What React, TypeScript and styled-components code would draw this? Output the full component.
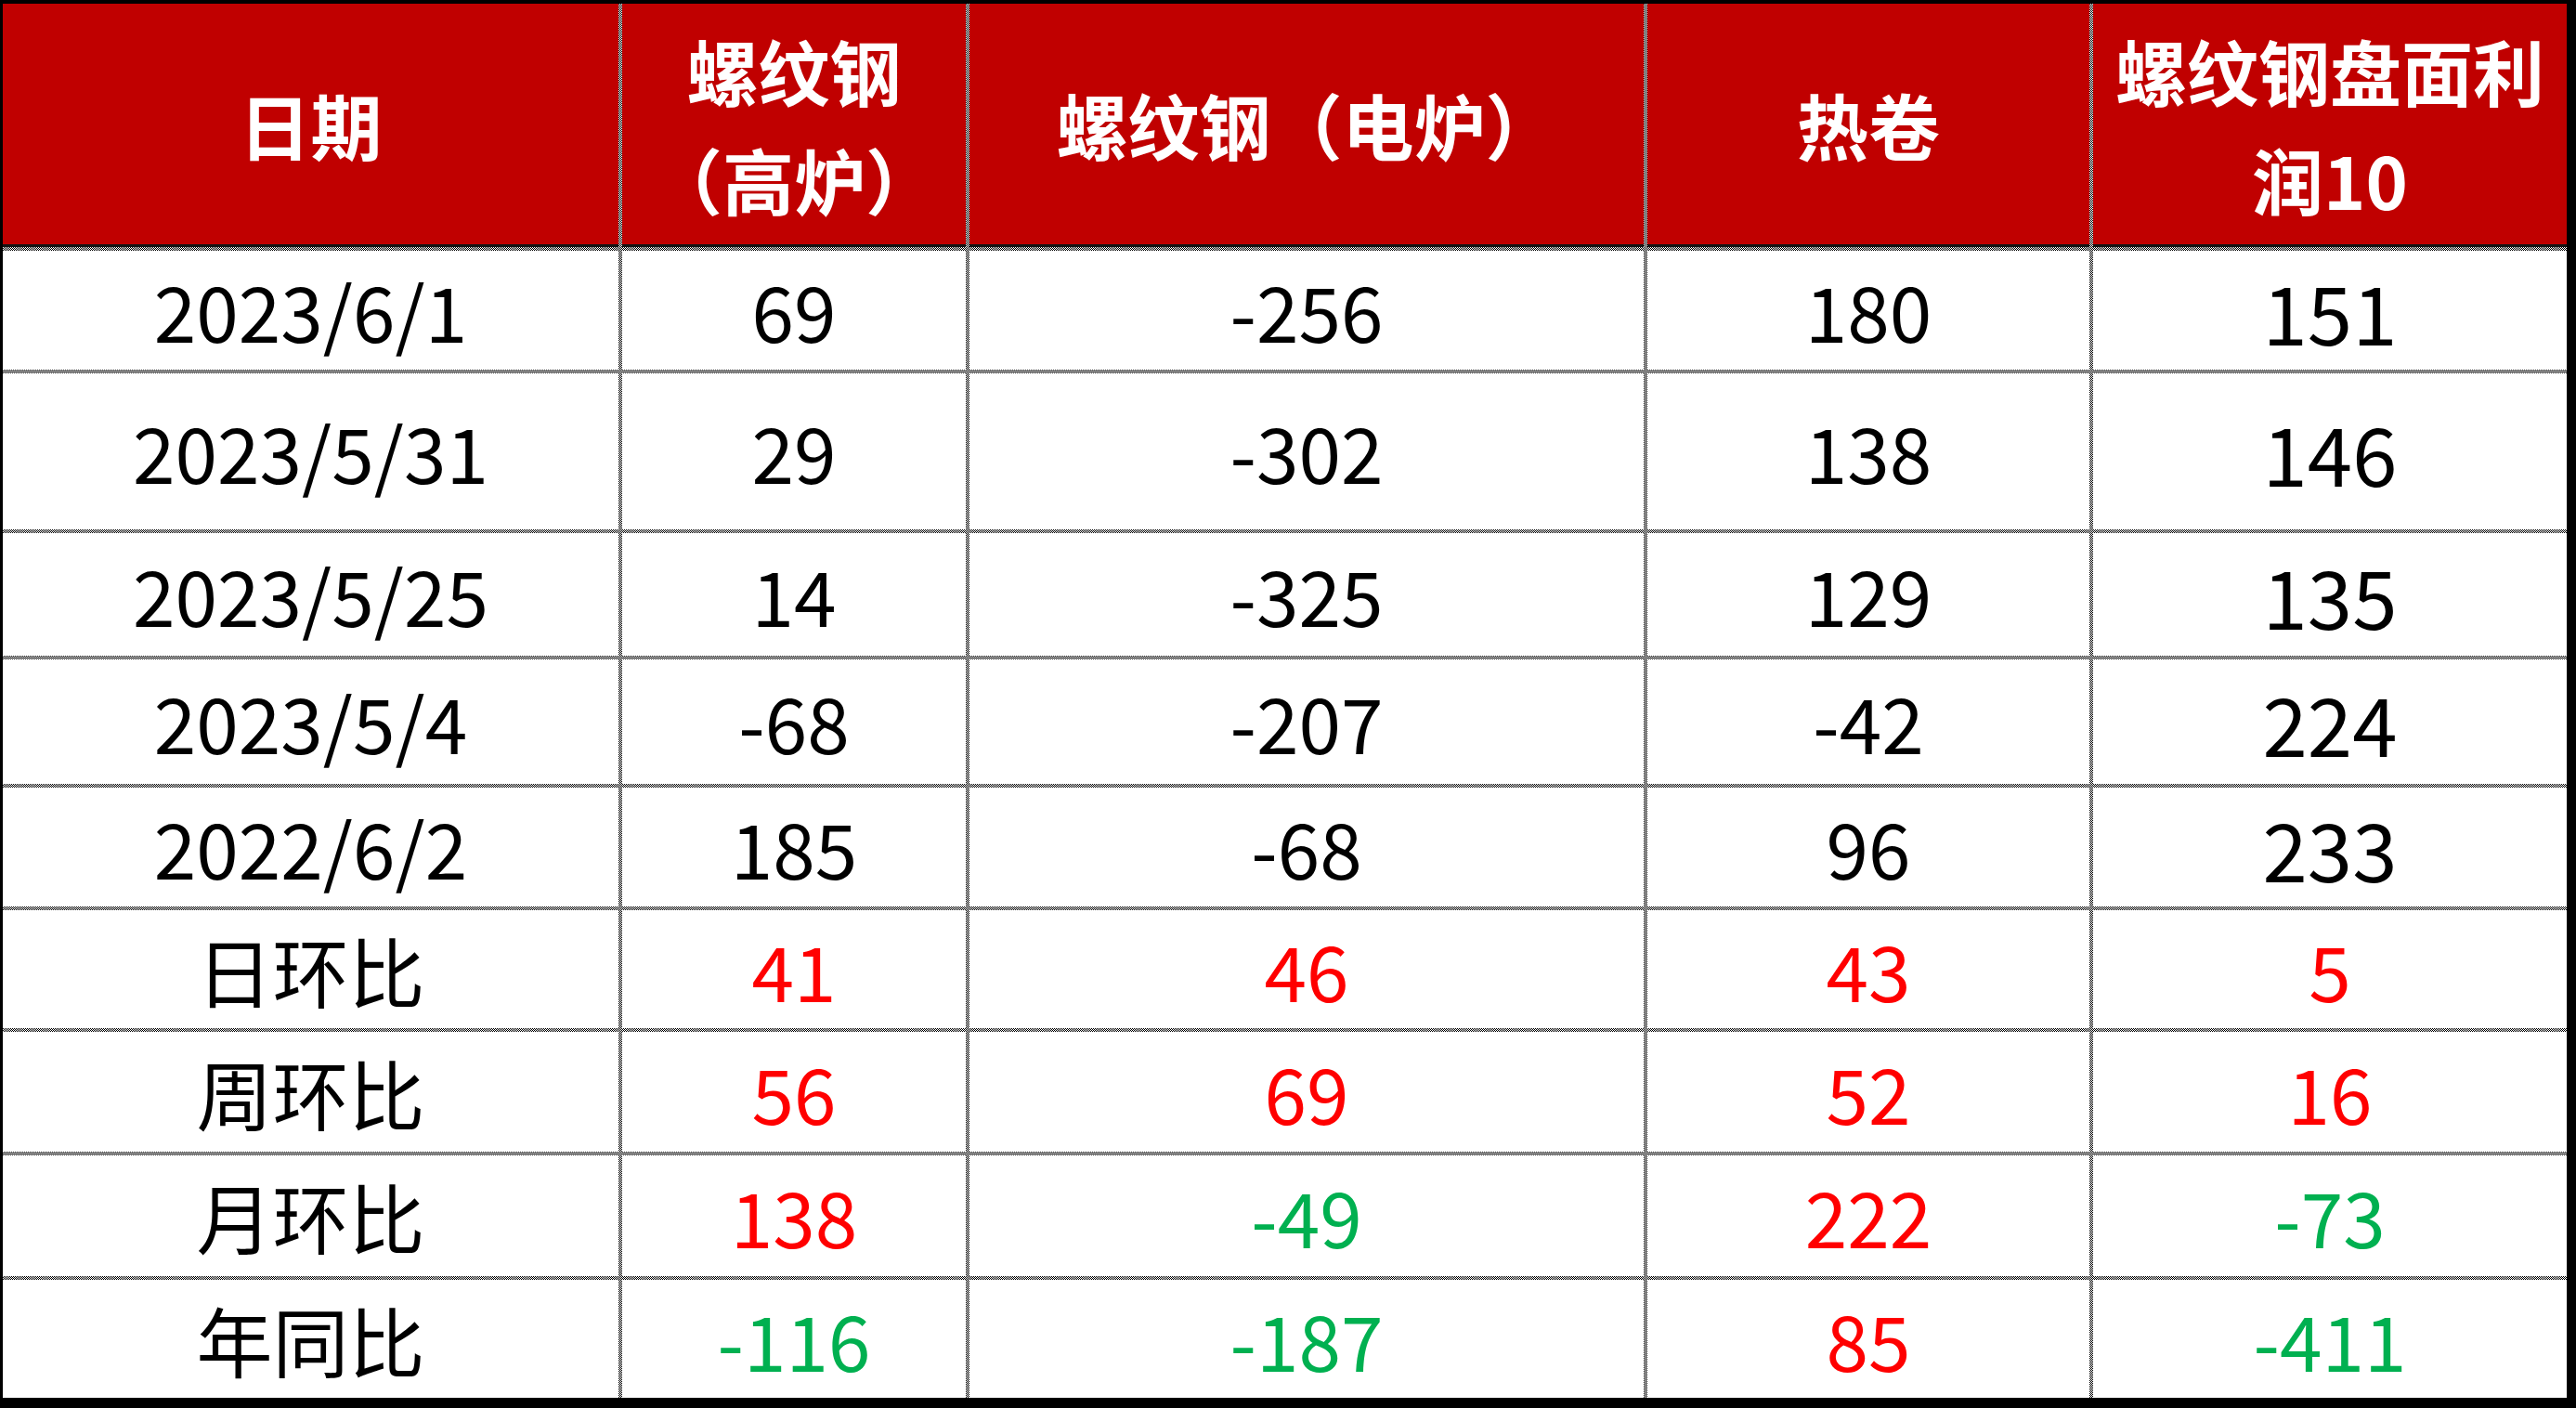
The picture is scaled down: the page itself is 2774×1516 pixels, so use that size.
import styled, { createGlobalStyle } from 'styled-components';

type Tone = 'plain' | 'up' | 'down';

interface Row {
  label: string;
  values: [number, number, number, number];
  toned?: boolean;
}

const headers = ['日期', '螺纹钢\n（高炉）', '螺纹钢（电炉）', '热卷', '螺纹钢盘面利\n润10'];

const rows: Row[] = [
  { label: '2023/6/1', values: [69, -256, 180, 151] },
  { label: '2023/5/31', values: [29, -302, 138, 146] },
  { label: '2023/5/25', values: [14, -325, 129, 135] },
  { label: '2023/5/4', values: [-68, -207, -42, 224] },
  { label: '2022/6/2', values: [185, -68, 96, 233] },
  { label: '日环比', values: [41, 46, 43, 5], toned: true },
  { label: '周环比', values: [56, 69, 52, 16], toned: true },
  { label: '月环比', values: [138, -49, 222, -73], toned: true },
  { label: '年同比', values: [-116, -187, 85, -411], toned: true },
];

const GlobalStyle = createGlobalStyle`
  html, body {
    margin: 0;
    padding: 0;
    background: #ffffff;
  }
  body {
    font-family: "Noto Sans CJK SC", "Noto Sans", sans-serif;
  }
`;

const Sheet = styled.div`
  box-sizing: border-box;
  width: 2774px;
  height: 1516px;
  border-style: solid;
  border-color: #000000;
  border-width: 4px 10px 11px 3px;
  display: grid;
  grid-template-columns: 663px 370px 726px 476px 510px;
  grid-template-rows: 262px 128px 168px 132px 134px 128px 127px 129px 130px 127px;
  gap: 4px;
  /* dotted gridlines show through the gaps */
  background: repeating-conic-gradient(#000000 0 25%, #ffffff 0 50%) 0 0 / 2px 2px;
`;

const HeadCell = styled.div`
  box-sizing: border-box;
  background: #c00000;
  border-bottom: 3px solid #141414;
  color: #ffffff;
  font-family: "Noto Sans CJK SC", sans-serif;
  font-weight: 700;
  font-size: 77px;
  line-height: 117px;
  white-space: pre-line;
  text-align: center;
  display: flex;
  align-items: center;
  justify-content: center;
`;

const toneColor: Record<Tone, string> = {
  plain: '#000000',
  up: '#ff0000',
  down: '#00b050',
};

const Cell = styled.div<{ $tone: Tone; $large?: boolean }>`
  background: #ffffff;
  color: ${(p) => toneColor[p.$tone]};
  font-family: "Noto Sans CJK SC", sans-serif;
  font-size: ${(p) => (p.$large ? '87px' : '82px')};
  line-height: 1;
  display: flex;
  align-items: center;
  justify-content: center;
  white-space: nowrap;
`;

function toneOf(value: number, toned?: boolean): Tone {
  if (!toned) return 'plain';
  return value < 0 ? 'down' : 'up';
}

export default function App() {
  return (
    <>
      <GlobalStyle />
      <Sheet>
        {headers.map((h) => (
          <HeadCell key={h}>{h}</HeadCell>
        ))}
        {rows.map((row) => [
          <Cell key={row.label} $tone="plain">
            {row.label}
          </Cell>,
          ...row.values.map((v, i) => (
            <Cell
              key={`${row.label}-${i}`}
              $tone={toneOf(v, row.toned)}
              $large={i === 3 && !row.toned}
            >
              {v}
            </Cell>
          )),
        ])}
      </Sheet>
    </>
  );
}
